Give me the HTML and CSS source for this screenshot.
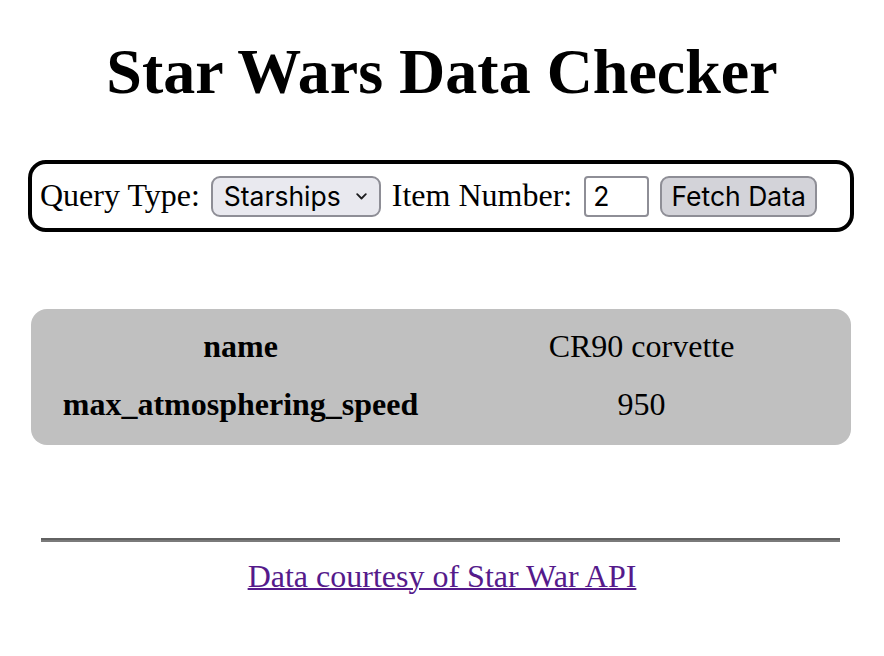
FILE: index.html
```html
<!DOCTYPE html>
<html lang="en">
<head>
<meta charset="utf-8">
<title>Star Wars Data Checker</title>
<link rel="stylesheet" href="styles.css">
</head>
<body>
<h1 class="title">Star Wars Data Checker</h1>

<form class="query-form">
  <label class="field-label" for="type">Query Type:</label>
  <span class="select-wrap">
    <select id="type" class="control select">
      <option>Starships</option>
      <option>People</option>
      <option>Planets</option>
    </select>
    <svg class="chevron" width="11" height="7" viewBox="0 0 11 7" aria-hidden="true"><path d="M1.2 1.2 L5.5 5.5 L9.8 1.2" fill="none" stroke="#1c1c1e" stroke-width="1.8" stroke-linecap="round" stroke-linejoin="round"/></svg>
  </span>
  <label class="field-label" for="num">Item Number:</label>
  <input id="num" class="control number" type="text" value="2">
  <button type="button" class="control button">Fetch Data</button>
</form>

<section class="results">
  <div class="key">name</div>
  <div class="value">CR90 corvette</div>
  <div class="key">max_atmosphering_speed</div>
  <div class="value">950</div>
</section>

<footer class="footer">
  <hr class="rule">
  <a class="credit" href="#">Data courtesy of Star War API</a>
</footer>
</body>
</html>
```

FILE: styles.css
```css
html, body {
  background: #ffffff;
}

body {
  margin: 16px;
  font-family: "Liberation Serif", "Times New Roman", serif;
  font-size: 32px;
  color: #000;
  text-align: center;
}

.title {
  font-size: 64px;
  font-weight: bold;
  margin: 19px 0 50.5px;
}

.query-form {
  display: flex;
  align-items: baseline;
  gap: 11px;
  margin: 0 14px 0 12px;
  padding: 12px 8px 11px;
  border: 4px solid #000;
  border-radius: 18px;
  text-align: left;
}

.field-label {
  line-height: normal;
}

.control {
  font-family: "Inter", "Noto Sans", sans-serif;
  font-size: 26.5px;
  color: #000;
  box-sizing: border-box;
  height: 41px;
  margin: 0;
  border: 2px solid #8e8e96;
}

.select-wrap {
  position: relative;
  display: inline-flex;
}

.select {
  appearance: none;
  -webkit-appearance: none;
  width: 170px;
  padding: 0 30px 0 11px;
  background: #e9e9ef;
  border-radius: 9px;
}

.chevron {
  position: absolute;
  right: 14px;
  top: 17px;
}

.number {
  width: 65px;
  padding: 0 7px;
  background: #fff;
  border-radius: 4px;
  margin-left: 1px;
}

.button {
  width: 157px;
  padding: 0;
  background: #d3d3d9;
  border-radius: 9px;
  text-align: center;
}

.results {
  display: grid;
  grid-template-columns: 1fr 1fr;
  column-gap: 4px;
  margin: 77px 17px 0 15px;
  padding: 8px 11px 12px;
  background: #c0c0c0;
  border-radius: 16px;
}

.key,
.value {
  padding: 10px 2px;
  line-height: 38px;
  text-align: center;
}

.key {
  font-weight: bold;
}

.footer {
  display: flex;
  flex-direction: column;
  align-items: center;
}

.rule {
  align-self: stretch;
  height: 0;
  margin: 93px 28px 16px 25px;
  border: none;
  border-top: 2px solid #626262;
  border-bottom: 2px solid #7a7a7a;
}

.credit {
  color: #551a8b;
  text-decoration: underline;
  text-decoration-thickness: 2px;
}
```
